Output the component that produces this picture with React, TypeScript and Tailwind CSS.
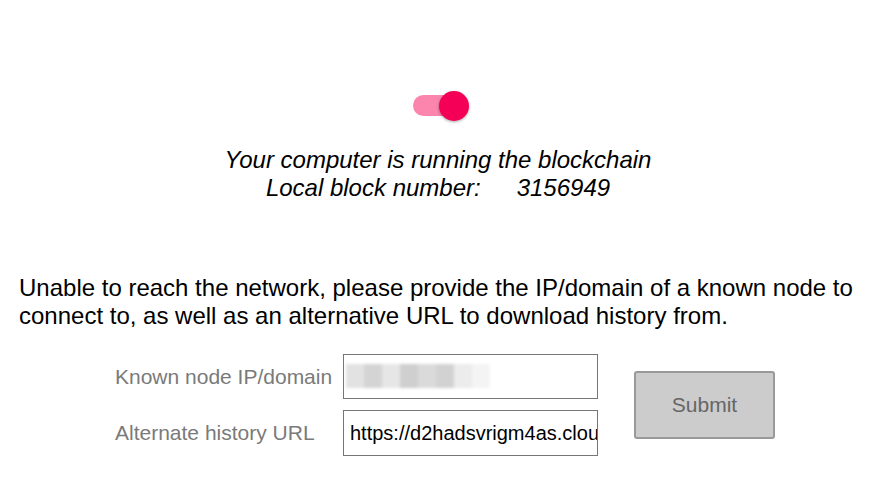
import React from "react";

function Toggle() {
  return (
    <div className="relative ml-[413px] h-[30px] w-[56px]">
      <div className="absolute left-0 top-[4px] h-[21px] w-[51px] rounded-full bg-[#fb85ac]" />
      <div className="absolute right-0 top-0 h-[30px] w-[30px] rounded-full bg-[#f50057] shadow-[0_1px_3px_rgba(0,0,0,0.35)]" />
    </div>
  );
}

function RedactedValue() {
  const blocks = ["bg-[#e2e2e2]", "bg-[#d4d4d4]", "bg-[#e6e6e6]", "bg-[#cfcfcf]", "bg-[#dadada]", "bg-[#d2d2d2]", "bg-[#ececec]"];
  return (
    <div className="pointer-events-none absolute left-[2px] top-[9px] flex h-[24px] blur-[1.5px]">
      {blocks.map((c, i) => (
        <div key={i} className={`h-full w-[18px] ${c}`} />
      ))}
      <div className="h-full w-[18px] bg-[#f4f4f4]" />
    </div>
  );
}

export default function App() {
  return (
    <div className="h-[490px] w-[876px] overflow-hidden bg-white pt-[91px] font-['Liberation_Sans',Arial,sans-serif] text-black">
      <Toggle />

      <div className="mt-[25px] text-center text-[24px] italic leading-[28px]">
        <div>Your computer is running the blockchain</div>
        <div>
          Local block number:<span className="ml-[36px]">3156949</span>
        </div>
      </div>

      <p className="ml-[19px] mt-[72px] text-[24px] leading-[28px]">
        Unable to reach the network, please provide the IP/domain of a known node to
        <br />
        connect to, as well as an alternative URL to download history from.
      </p>

      <div className="ml-[115px] mt-[24px] flex items-center gap-[36px]">
        <div className="flex flex-col gap-[11px]">
          <div className="flex items-center">
            <label className="w-[228px] text-[21px] text-[#7a7a7a]">Known node IP/domain</label>
            <div className="relative h-[45px] w-[255px] border border-[#767676]">
              <RedactedValue />
            </div>
          </div>
          <div className="flex items-center">
            <label className="w-[228px] text-[21px] text-[#7a7a7a]">Alternate history URL</label>
            <input
              readOnly
              value="https://d2hadsvrigm4as.cloudfront.net"
              className="h-[46px] w-[255px] border border-[#767676] pl-[6px] text-[20px] text-black outline-none"
            />
          </div>
        </div>
        <button className="h-[68px] w-[141px] rounded-[3px] border-2 border-[#999999] bg-[#cccccc] text-[21px] text-[#666666]">
          Submit
        </button>
      </div>
    </div>
  );
}
